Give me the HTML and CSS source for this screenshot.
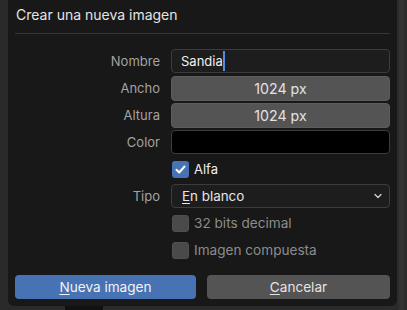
FILE: index.html
```html
<!DOCTYPE html>
<html>
<head>
<meta charset="utf-8">
<link rel="stylesheet" href="styles.css">
</head>
<body>
<div class="stage">
  <div class="dialog">
    <div class="title">Crear una nueva imagen</div>
    <div class="sep"></div>
    <div class="form">
      <div class="label">Nombre</div>
      <div class="field text"><span>Sandia</span><span class="caret"></span></div>
      <div class="label">Ancho</div>
      <div class="field num">1024 px</div>
      <div class="label">Altura</div>
      <div class="field num">1024 px</div>
      <div class="label">Color</div>
      <div class="field color"></div>
      <div class="label"></div>
      <div class="check on"><span class="box"><svg width="13" height="13" viewBox="0 0 13 13"><path d="M2.5 6.8 L5.2 9.5 L10.5 3.5" fill="none" stroke="#fff" stroke-width="2" stroke-linecap="round" stroke-linejoin="round"/></svg></span><span class="ctext">Alfa</span></div>
      <div class="label">Tipo</div>
      <div class="field select"><span><u>E</u>n blanco</span><svg class="chev" width="10" height="10" viewBox="0 0 10 10"><path d="M2 3.5 L5 6.5 L8 3.5" fill="none" stroke="#cfcfcf" stroke-width="1.3" stroke-linecap="round" stroke-linejoin="round"/></svg></div>
      <div class="label"></div>
      <div class="check off"><span class="box"></span><span class="ctext">32 bits decimal</span></div>
      <div class="label"></div>
      <div class="check off"><span class="box"></span><span class="ctext">Imagen compuesta</span></div>
    </div>
    <div class="buttons">
      <div class="btn primary"><u>N</u>ueva imagen</div>
      <div class="btn"><u>C</u>ancelar</div>
    </div>
  </div>
  <div class="side"><div class="thumb"></div></div>
</div>
<div class="bottom-mark"></div>
</body>
</html>
```

FILE: styles.css
```css
html, body {
  margin: 0;
  padding: 0;
}
body {
  width: 407px;
  height: 310px;
  overflow: hidden;
  background: #2a2a2a;
  font-family: Inter, "Noto Sans", sans-serif;
  position: relative;
}
.stage {
  display: flex;
  padding-left: 8px;
}
.dialog {
  width: 389px;
  height: 306px;
  background: #181818;
  border-radius: 0 0 6px 6px;
  box-sizing: border-box;
  padding: 0 7px;
  display: flex;
  flex-direction: column;
}
.title {
  color: #e4e4e4;
  font-size: 14px;
  line-height: 14px;
  padding-top: 8px;
  padding-left: 1px;
}
.sep {
  height: 1px;
  background: #363636;
  margin-top: 11px;
}
.form {
  display: grid;
  grid-template-columns: 145px 219px;
  column-gap: 11px;
  row-gap: 3px;
  grid-auto-rows: 24px;
  margin-top: 15px;
}
.label {
  color: #a3a3a3;
  font-size: 13px;
  text-align: right;
  line-height: 24px;
}
.field {
  border-radius: 4px;
  box-sizing: border-box;
  font-size: 13.4px;
  color: #e6e6e6;
  line-height: 22px;
}
.field.text {
  background: #1d1d1d;
  border: 1px solid #3c3c3c;
  padding-left: 9px;
  display: flex;
  align-items: center;
  color: #f0f0f0;
  font-size: 13px;
}
.caret {
  display: inline-block;
  width: 2px;
  height: 20px;
  background: #4f8de6;
  margin-left: 0px;
}
.field.num {
  background: #545454;
  border: 1px solid #5c5c5c;
  text-align: center;
  height: 25px;
  line-height: 23px;
  color: #e2e2e2;
  font-size: 14.2px;
}
.field.color {
  background: #000;
  border: 1px solid #3c3c3c;
}
.field.select {
  background: #1d1d1d;
  border: 1px solid #3c3c3c;
  display: flex;
  align-items: center;
  justify-content: space-between;
  padding: 0 6px 0 10px;
  color: #e6e6e6;
}
.chev {
  display: block;
}
u {
  text-decoration: underline;
  text-underline-offset: 2px;
  text-decoration-thickness: 1px;
}
.check {
  display: flex;
  align-items: center;
  font-size: 13.6px;
}
.check.on {
  font-size: 13px;
}
.check .box {
  width: 17px;
  height: 17px;
  border-radius: 3px;
  box-sizing: border-box;
  display: flex;
  align-items: center;
  justify-content: center;
  margin-left: 1px;
}
.check.on .box {
  background: #4772b3;
}
.check.off .box {
  background: #4a4a4a;
  border: 1px solid #505050;
}
.ctext {
  margin-left: 5px;
}
.check.on .ctext {
  color: #ededed;
}
.check.off .ctext {
  color: #8c8c8c;
}
.buttons {
  display: grid;
  grid-template-columns: 181px 183px;
  column-gap: 11px;
  margin-top: 13px;
}
.btn {
  height: 24px;
  border-radius: 4px;
  background: #545454;
  color: #e4e4e4;
  font-size: 13.6px;
  text-align: center;
  line-height: 24px;
}
.btn.primary {
  background: #4772b3;
  color: #f4f4f4;
}
.side {
  width: 10px;
  height: 310px;
  background: #2c2c2c;
  position: relative;
}
.thumb {
  position: absolute;
  left: 2px;
  top: 0;
  width: 5px;
  height: 310px;
  background: #323232;
}
.bottom-mark {
  position: absolute;
  left: 65px;
  top: 306px;
  width: 38px;
  height: 4px;
  background: #111;
}
```
